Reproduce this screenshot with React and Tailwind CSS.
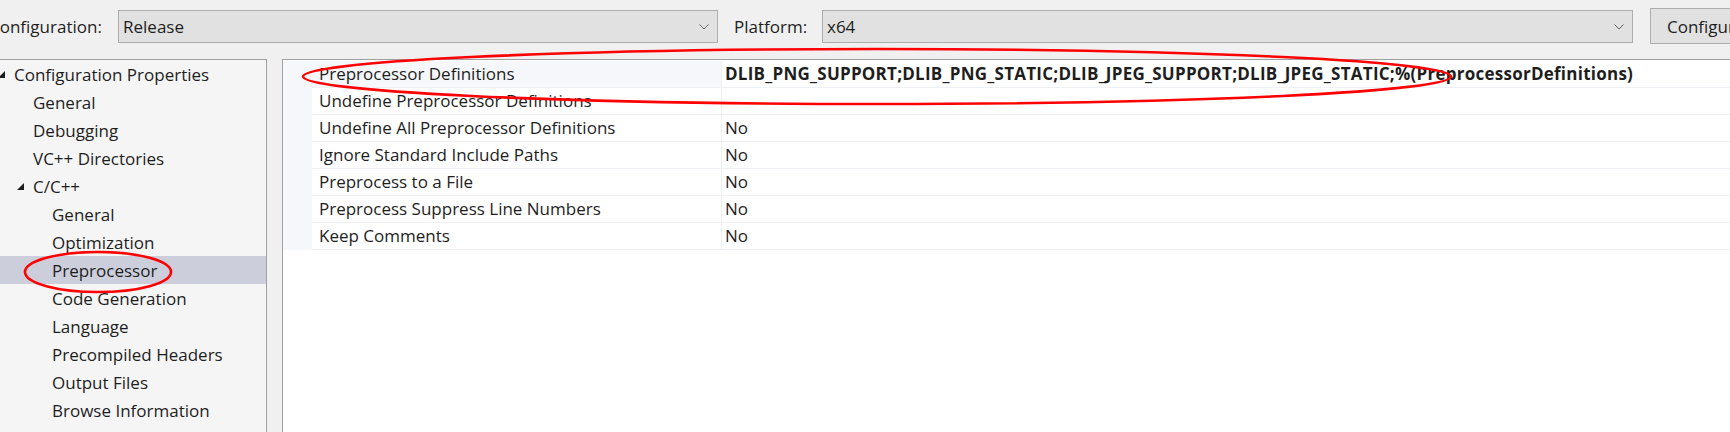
import React from "react";

function Chevron() {
  return (
    <svg width="10" height="6" viewBox="0 0 10 6" className="shrink-0">
      <path d="M0.5 0.5 L5 5 L9.5 0.5" fill="none" stroke="#606060" strokeWidth="1" />
    </svg>
  );
}

function Tri() {
  return (
    <svg width="7" height="7" viewBox="0 0 7 7">
      <polygon points="7,0 7,7 0,7" fill="#1e1e1e" />
    </svg>
  );
}

const rows = [
  ["Preprocessor Definitions", "DLIB_PNG_SUPPORT;DLIB_PNG_STATIC;DLIB_JPEG_SUPPORT;DLIB_JPEG_STATIC;%(PreprocessorDefinitions)", true],
  ["Undefine Preprocessor Definitions", "", false],
  ["Undefine All Preprocessor Definitions", "No", false],
  ["Ignore Standard Include Paths", "No", false],
  ["Preprocess to a File", "No", false],
  ["Preprocess Suppress Line Numbers", "No", false],
  ["Keep Comments", "No", false],
];

const subItems = [
  "General",
  "Optimization",
  "Preprocessor",
  "Code Generation",
  "Language",
  "Precompiled Headers",
  "Output Files",
  "Browse Information",
  "Advanced",
];

export default function App() {
  return (
    <div className="relative w-[1730px] h-[432px] overflow-hidden bg-[#f0f0f0] text-[#1e1e1e] font-['Open_Sans',sans-serif] text-[17px] leading-none">
      {/* Top bar */}
      <div className="flex items-start h-[59px] pt-[10px] whitespace-nowrap">
        <div className="h-[33px] flex items-center ml-[-11px] w-[129px] shrink-0">Configuration:</div>
        <div className="h-[33px] w-[600px] shrink-0 bg-[#e1e1e1] border border-[#adadad] flex items-center pl-[4px] pr-[8px]">
          <span className="flex-1">Release</span>
          <Chevron />
        </div>
        <div className="h-[33px] flex items-center ml-[16px] w-[88px] shrink-0">Platform:</div>
        <div className="h-[33px] w-[811px] shrink-0 bg-[#e1e1e1] border border-[#adadad] flex items-center pl-[4px] pr-[8px]">
          <span className="flex-1">x64</span>
          <Chevron />
        </div>
        <div className="h-[36px] mt-[-2px] ml-[17px] w-[120px] shrink-0 bg-[#e1e1e1] border border-[#adadad] flex items-center pl-[16px] overflow-hidden">
          Configuration Manager...
        </div>
      </div>

      {/* Panels */}
      <div className="flex h-[373px]">
        {/* Tree */}
        <div className="w-[267px] shrink-0 border-t border-r border-[#a0a0a0] bg-[#f5f5f5] whitespace-nowrap">
          <div className="flex items-center h-[28px]">
            <span className="w-[19px] ml-[-5px] pl-[3px] flex items-center"><Tri /></span>
            Configuration Properties
          </div>
          <div className="flex items-center h-[28px] pl-[33px]">General</div>
          <div className="flex items-center h-[28px] pl-[33px]">Debugging</div>
          <div className="flex items-center h-[28px] pl-[33px]">VC++ Directories</div>
          <div className="flex items-center h-[28px] pl-[14px]">
            <span className="w-[19px] pl-[3px] flex items-center"><Tri /></span>
            C/C++
          </div>
          {subItems.map((s) => (
            <div
              key={s}
              className={
                s === "Preprocessor"
                  ? "flex items-center h-[28px] pl-[52px] bg-[#cccedb]"
                  : "flex items-center h-[28px] pl-[52px]"
              }
            >
              {s}
            </div>
          ))}
        </div>

        <div className="w-[15px] shrink-0" />

        {/* Property grid */}
        <div className="flex-1 border-t border-l border-[#a0a0a0] bg-white pt-px whitespace-nowrap">
          {rows.map(([label, value, sel], i) => (
            <div key={i} className="flex h-[27px]">
              <div className="w-[29px] shrink-0 bg-[#f5f7fa]" />
              <div
                className={
                  sel
                    ? "w-[410px] shrink-0 flex items-center pl-[7px] pb-[2px] border-r border-b border-[#eef0f4] bg-[#f5f7fa]"
                    : "w-[410px] shrink-0 flex items-center pl-[7px] pb-[2px] border-r border-b border-[#eef0f4]"
                }
              >
                {label}
              </div>
              <div
                className={
                  sel
                    ? "flex-1 flex items-center pl-[3px] pb-[2px] border-b border-[#eef0f4] font-bold tracking-[0.25px]"
                    : "flex-1 flex items-center pl-[3px] pb-[2px] border-b border-[#eef0f4]"
                }
              >
                {value}
              </div>
            </div>
          ))}
        </div>
      </div>

      {/* Red annotation ellipses */}
      <svg className="absolute inset-0 pointer-events-none" width="1730" height="432">
        <ellipse cx="877" cy="76.5" rx="574" ry="27.5" fill="none" stroke="#ff0000" strokeWidth="2.6" />
        <ellipse cx="98" cy="272" rx="73" ry="20" fill="none" stroke="#ff0000" strokeWidth="2.6" />
      </svg>
    </div>
  );
}
